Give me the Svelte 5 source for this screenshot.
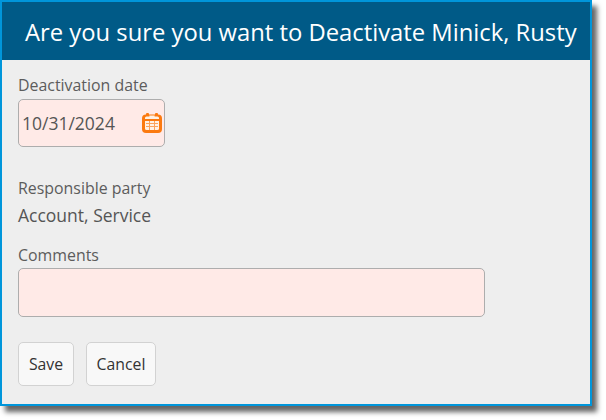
<script>
  let date = '10/31/2024'
</script>

<div class="dialog">
  <h1 class="title">Are you sure you want to Deactivate Minick, Rusty</h1>
  <form class="body">
    <label class="label" for="date">Deactivation date</label>
    <div class="date-input">
      <input id="date" class="date-text" bind:value={date} />
      <svg class="cal" viewBox="0 0 20 20" width="20" height="20" aria-hidden="true">
        <rect x="0" y="1.5" width="20" height="18.5" rx="4" fill="#fb7a10" />
        <rect x="4" y="0" width="3" height="4.5" rx="1" fill="#fb7a10" />
        <rect x="13" y="0" width="3" height="4.5" rx="1" fill="#fb7a10" />
        <rect x="3" y="3.5" width="14" height="13.5" rx="1.5" fill="#fff1e4" />
        <rect x="7.4" y="2.5" width="5.2" height="2" fill="#fff1e4" />
        <rect x="3" y="6" width="14" height="2" fill="#fb7a10" />
        <path d="M4 10.5h12M4 13.5h12M7.5 8v9M12.5 8v9" stroke="#fba35c" stroke-width="1" fill="none" />
      </svg>
    </div>

    <div class="label party">Responsible party</div>
    <div class="value">Account, Service</div>

    <label class="label comments-label" for="comments">Comments</label>
    <input id="comments" class="comments" />

    <div class="actions">
      <button type="button" class="btn save">Save</button>
      <button type="button" class="btn cancel">Cancel</button>
    </div>
  </form>
</div>

<style>
  :global(body) {
    margin: 0;
    min-height: 420px;
    background: #fff;
    font-family: "Open Sans", "Noto Sans", sans-serif;
  }

  .dialog {
    box-sizing: border-box;
    width: 592px;
    height: 406px;
    border: 2px solid #0096db;
    background: #eeeeee;
    box-shadow: 5px 6px 5px #666;
  }

  .title {
    margin: 0;
    height: 58px;
    box-sizing: border-box;
    padding: 15px 0 0 23px;
    background: #005a87;
    color: #fff;
    font-size: 23.8px;
    font-weight: 400;
    line-height: 30px;
    white-space: nowrap;
  }

  .body {
    display: flex;
    flex-direction: column;
    align-items: flex-start;
    padding: 14px 0 0 16px;
  }

  .label {
    color: #5c5c5c;
    font-size: 15.9px;
    line-height: 22px;
  }

  .date-input {
    box-sizing: border-box;
    display: flex;
    align-items: center;
    justify-content: space-between;
    width: 147px;
    height: 48px;
    margin-top: 3px;
    padding: 0 2px 0 3px;
    background: #ffeae7;
    border: 1px solid #adadad;
    border-radius: 5px;
  }

  .date-text {
    width: 110px;
    padding: 0;
    border: 0;
    outline: 0;
    background: transparent;
    color: #555;
    font: 400 17.5px "Open Sans", sans-serif;
  }

  .party {
    margin-top: 30px;
  }

  .value {
    margin-top: 5px;
    color: #555;
    font-size: 17.5px;
    line-height: 22px;
  }

  .comments-label {
    margin-top: 18px;
  }

  .comments {
    box-sizing: border-box;
    width: 467px;
    height: 49px;
    margin-top: 2px;
    background: #ffeae7;
    border: 1px solid #adadad;
    border-radius: 5px;
    outline: 0;
  }

  .actions {
    display: flex;
    gap: 12px;
    margin-top: 25px;
  }

  .btn {
    box-sizing: border-box;
    height: 44px;
    padding: 0;
    background: #f8f8f8;
    border: 1px solid #d2d2d2;
    border-radius: 5px;
    color: #333;
    font: 400 15.8px "Open Sans", sans-serif;
  }

  .save {
    width: 56px;
  }

  .cancel {
    width: 70px;
  }
</style>
